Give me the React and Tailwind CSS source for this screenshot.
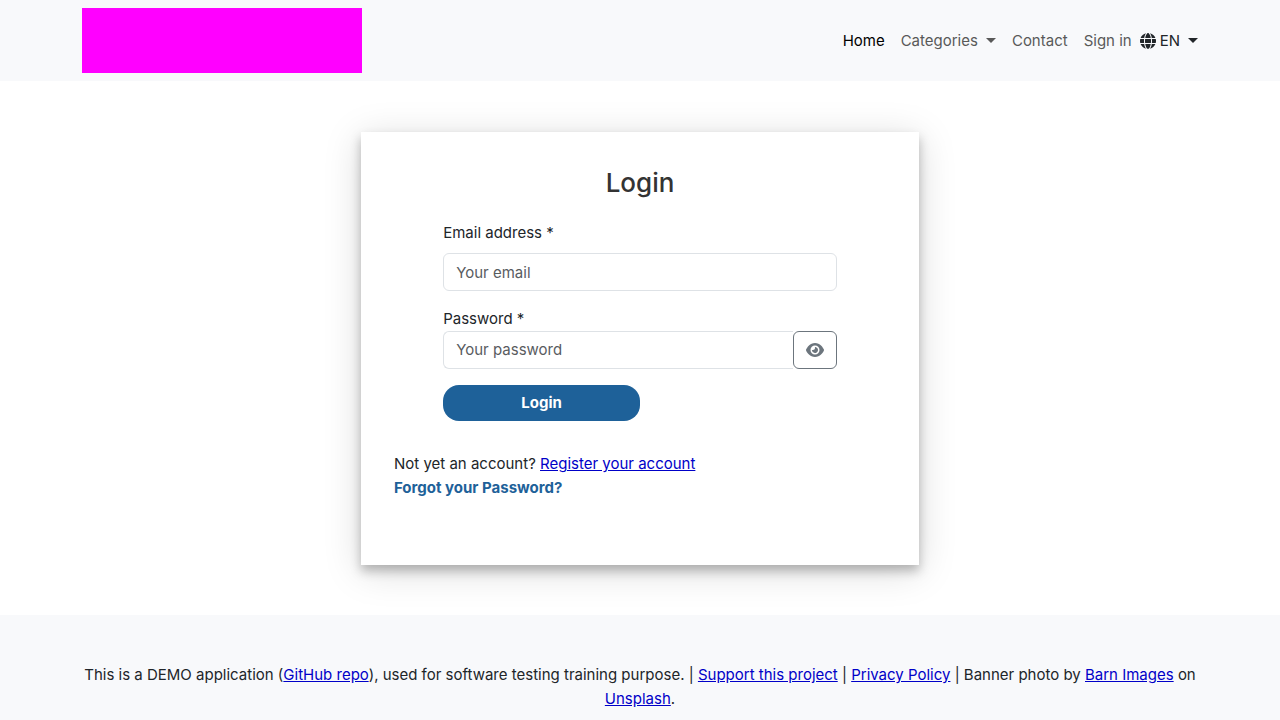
import { FaGlobe, FaEye } from "react-icons/fa6";

const linkClass = "text-[#0000c8] underline";

function Caret() {
  return (
    <span
      aria-hidden="true"
      className="inline-block h-0 w-0 border-x-[5px] border-t-[5px] border-x-transparent border-t-current"
    />
  );
}

function Header() {
  return (
    <header className="bg-[#f8f9fb] py-2">
      <div className="mx-auto flex max-w-[1140px] items-center justify-between px-3">
        <a href="#home" aria-label="Home page" className="block h-[65px] w-[280px] bg-[#ff00ff]" />
        <nav className="flex items-center gap-4 text-[#595959]">
          <a href="#home" className="text-black">Home</a>
          <button type="button" className="flex items-center gap-2">
            Categories <Caret />
          </button>
          <a href="#contact">Contact</a>
          <div className="flex items-center gap-2">
            <a href="#signin">Sign in</a>
            <button type="button" className="flex items-center gap-2 text-[#212529]">
              <span className="flex items-center gap-1">
                <FaGlobe className="size-4" /> EN
              </span>
              <Caret />
            </button>
          </div>
        </nav>
      </div>
    </header>
  );
}

function LoginCard() {
  return (
    <section className="w-1/2 bg-white px-[33px] pt-[33px] pb-[65px] shadow-[0_6px_10px_rgba(0,0,0,0.25),0_6px_36px_rgba(0,0,0,0.15)]">
      <h1 className="text-center text-[26px] leading-9 font-medium text-[#333333]">Login</h1>
      <form className="mx-auto mt-5 w-4/5">
        <label htmlFor="email" className="block">Email address *</label>
        <input
          id="email"
          type="email"
          placeholder="Your email"
          className="mt-2 block h-[38px] w-full rounded-md border border-[#dee2e6] px-3 placeholder:text-[#595c5f]"
        />
        <label htmlFor="password" className="mt-4 block">Password *</label>
        <div className="flex h-[38px]">
          <input
            id="password"
            type="password"
            placeholder="Your password"
            className="min-w-0 flex-1 rounded-l-md border border-r-0 border-[#dee2e6] px-3 placeholder:text-[#595c5f]"
          />
          <button
            type="button"
            aria-label="Show password"
            className="flex w-11 items-center justify-center rounded-md border border-[#6c757d] text-[#6c757d]"
          >
            <FaEye className="size-[18px]" />
          </button>
        </div>
        <button
          type="button"
          className="mt-4 block h-9 w-1/2 rounded-2xl bg-[#1e6199] font-bold text-white"
        >
          Login
        </button>
      </form>
      <p className="mt-[31px]">
        Not yet an account? <a href="#register" className={linkClass}>Register your account</a>
      </p>
      <a href="#forgot" className="block font-bold text-[#1e6199]">Forgot your Password?</a>
    </section>
  );
}

export default function App() {
  return (
    <div className="flex min-h-screen flex-col bg-white font-['Inter',sans-serif] text-[15px] leading-6 text-[#212529]">
      <Header />
      <main className="mx-auto flex w-full max-w-[1140px] justify-center px-3 pt-[51px] pb-[50px]">
        <LoginCard />
      </main>
      <footer className="grow bg-[#f8f9fb] pt-12 pb-2">
        <p className="mx-auto max-w-[1140px] text-center">
          This is a DEMO application (<a href="#github" className={linkClass}>GitHub repo</a>), used for software
          testing training purpose. | <a href="#support" className={linkClass}>Support this project</a> |{" "}
          <a href="#privacy" className={linkClass}>Privacy Policy</a> | Banner photo by{" "}
          <a href="#barn" className={linkClass}>Barn Images</a> on{" "}
          <a href="#unsplash" className={linkClass}>Unsplash</a>.
        </p>
      </footer>
    </div>
  );
}
